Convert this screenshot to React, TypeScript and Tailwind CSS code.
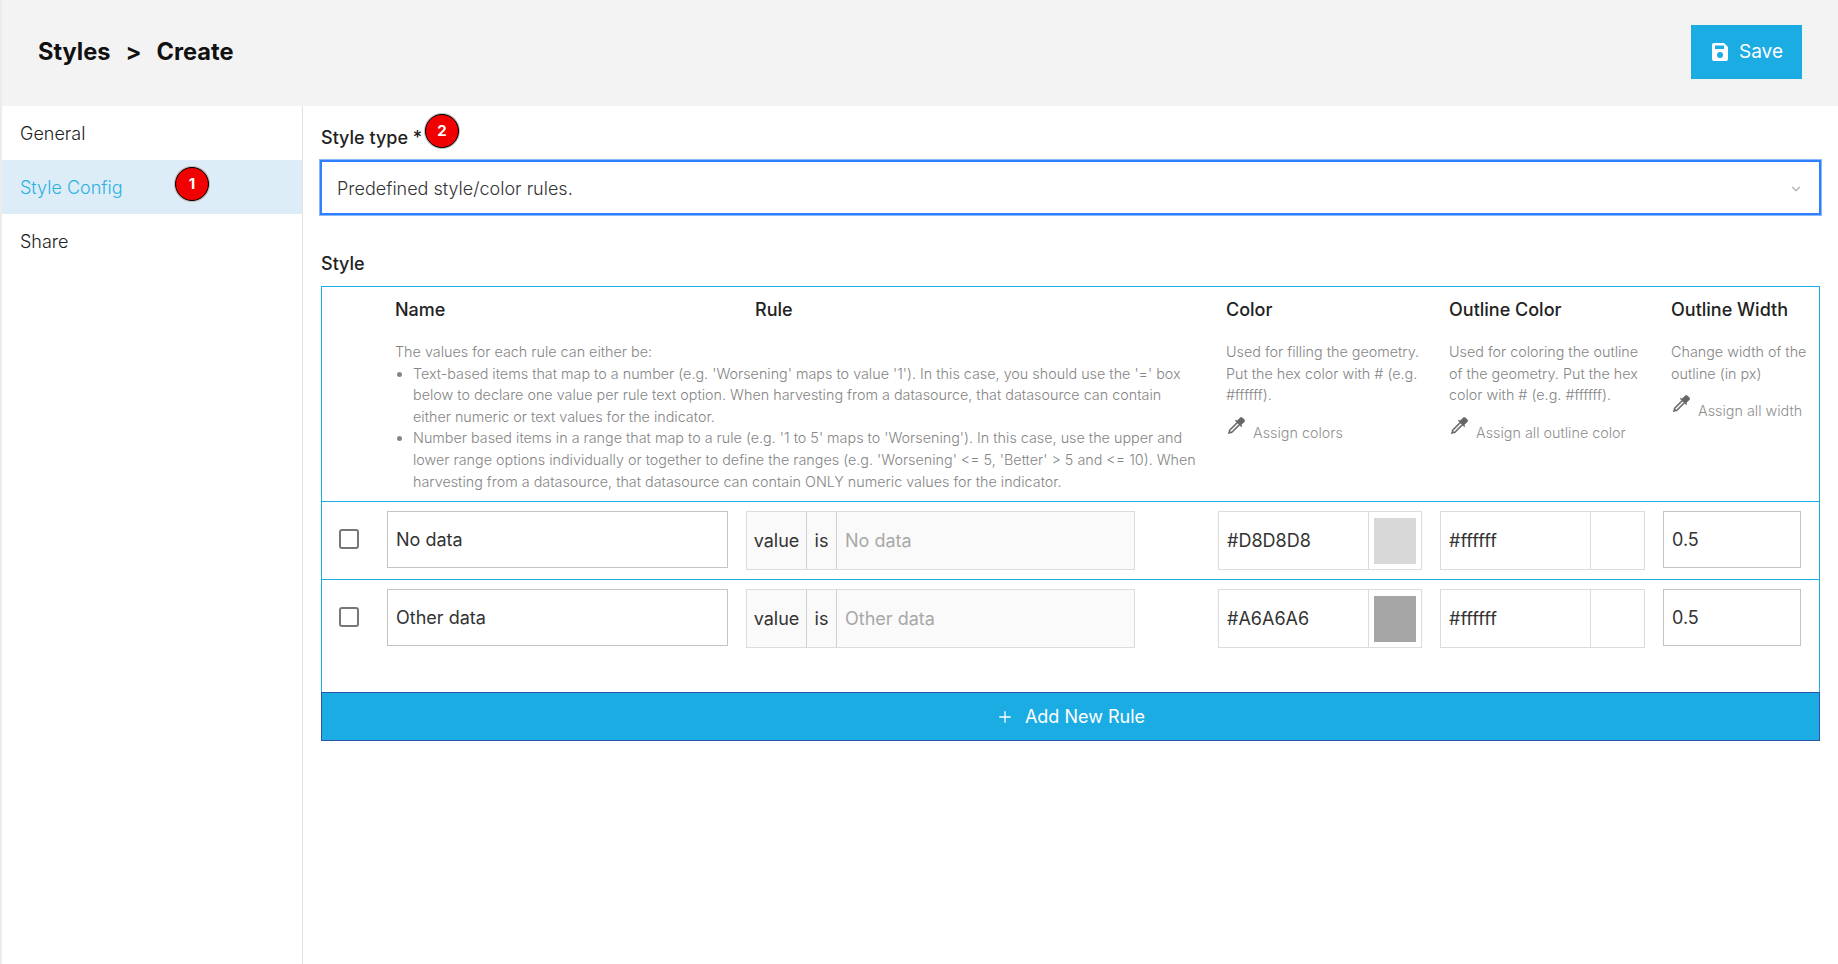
import { ChevronDown, Plus } from 'lucide-react';
import { BsEyedropper } from 'react-icons/bs';

const FONT = "font-['Inter',sans-serif]";

function Badge({ n, className }: { n: number; className: string }) {
  return (
    <span
      className={`absolute flex h-[34px] w-[34px] items-center justify-center rounded-full border border-black bg-[#f00000] text-[15px] font-bold text-white shadow-[0_0_0_1px_#bbb] ${className}`}
    >
      {n}
    </span>
  );
}

function SaveIcon() {
  return (
    <svg width="16" height="18" viewBox="0 0 16 18" aria-hidden="true">
      <path
        fillRule="evenodd"
        fill="#fff"
        d="M2 0h10l4 4v12a2 2 0 0 1-2 2H2a2 2 0 0 1-2-2V2a2 2 0 0 1 2-2zm1 2.5v3.5h9V2.5H3zM8 9a3 3 0 1 0 0 6a3 3 0 0 0 0-6z"
      />
    </svg>
  );
}

function Assign({ label }: { label: string }) {
  return (
    <div className="mt-4 flex items-start text-[14.35px] leading-[22px] text-[#8f8f8f]">
      <BsEyedropper className="ml-[2px] mr-[8px] mt-[-5px] shrink-0 text-[#666]" size={17} stroke="currentColor" strokeWidth={0.6} />
      <span>{label}</span>
    </div>
  );
}

function ColorField({ value, swatch, w, split }: { value: string; swatch?: string; w: string; split: string }) {
  return (
    <div className={`flex h-[59px] border border-[#dcdcdc] bg-white ${w}`}>
      <div className={`flex items-center border-r border-[#dcdcdc] pl-[8px] text-[18px] text-[#333] ${split}`}>{value}</div>
      <div className="flex flex-1 items-center justify-center">
        {swatch === '#D8D8D8' && <div className="h-[46px] w-[42px] bg-[#d8d8d8]" />}
        {swatch === '#A6A6A6' && <div className="h-[46px] w-[42px] bg-[#a6a6a6]" />}
      </div>
    </div>
  );
}

function RuleRow({ name, color, last }: { name: string; color: string; last?: boolean }) {
  return (
    <div className={`flex items-start pt-[9px] ${last ? 'h-[113px]' : 'h-[78px] border-b border-[#1cace4]'}`}>
      <div className="flex h-[57px] w-[65px] items-center pl-[17px]">
        <span className="mt-[-2px] h-[20px] w-[20px] rounded-[3px] border-[2.5px] border-[#777] bg-white" />
      </div>
      <div className="flex h-[57px] w-[341px] items-center border border-[#c4c4c4] bg-white px-[8px] text-[18px] text-[#333]">
        {name}
      </div>
      <div className="ml-[18px] flex h-[59px] w-[389px] border border-[#dcdcdc] bg-[#fafafa] text-[18px]">
        <div className="flex w-[60px] items-center justify-center border-r border-[#cfcfcf] text-[#333]">value</div>
        <div className="flex w-[30px] items-center justify-center border-r border-[#cfcfcf] text-[#333]">is</div>
        <div className="flex flex-1 items-center pl-[8px] text-[#a8a8a8]">{name}</div>
      </div>
      <div className="ml-[83px]">
        <ColorField value={color} swatch={color} w="w-[204px]" split="w-[150px]" />
      </div>
      <div className="ml-[18px]">
        <ColorField value="#ffffff" w="w-[205px]" split="w-[150px]" />
      </div>
      <div className="ml-[18px] flex h-[57px] w-[138px] items-center border border-[#c4c4c4] bg-white px-[8px] text-[18px] text-[#333]">
        0.5
      </div>
    </div>
  );
}

export default function App() {
  return (
    <div className={`${FONT} relative flex h-[964px] w-full flex-col overflow-hidden border-l-2 border-[#ececec] bg-white`}>
      <div className="absolute left-[-2px] top-0 h-[66px] w-[2px] bg-[#f00000]" />

      <header className="flex h-[106px] shrink-0 items-center justify-between bg-[#f3f3f3] pb-[2px] pl-[36px] pr-[36px]">
        <h1 className="flex gap-[15px] text-[23.6px] font-bold text-[#111]">
          <span>Styles</span>
          <span>&gt;</span>
          <span>Create</span>
        </h1>
        <button className="flex h-[54px] w-[111px] items-center justify-center gap-[11px] bg-[#1cace4] pl-[2px] text-[19px] text-white">
          <SaveIcon />
          Save
        </button>
      </header>

      <div className="flex flex-1">
        <nav className="w-[301px] shrink-0 border-r border-[#e3e3e3] text-[18px] font-light text-[#222]">
          <div className="flex h-[54px] items-center pl-[18px] pt-[1px]">General</div>
          <div className="relative flex h-[54px] items-center bg-[#dcedf7] pl-[18px] pt-[1px] text-[#2eb0e4]">
            Style Config
            <Badge n={1} className="left-[173px] top-[7px]" />
          </div>
          <div className="flex h-[54px] items-center pl-[18px] pt-[1px]">Share</div>
        </nav>

        <main className="min-w-0 flex-1 pl-[18px] pr-[17px]">
          <label className="relative mt-[20px] block text-[18px] font-medium leading-[24px] text-[#222]">
            Style type *
            <Badge n={2} className="left-[104px] top-[-12px]" />
          </label>
          <div className="-ml-px mt-[10px] flex h-[55px] items-center justify-between border-2 border-[#2f80ff] pl-[15px] pr-[16px] pt-[2px] text-[18px] font-light text-[#333] shadow-[0_0_0_1px_#8ab8ff]">
            Predefined style/color rules.
            <ChevronDown size={14} className="text-[#aab0b8]" />
          </div>

          <div className="mt-[37px] text-[18px] font-medium leading-[24px] text-[#222]">Style</div>

          <section className="mr-px mt-[10px] border border-[#1cace4]">
            <div className="flex h-[215px] border-b border-[#1cace4] pt-[11px] text-[14.35px] font-light leading-[21.6px] text-[#858585]">
              <div className="ml-[65px] w-[831px] pl-[8px] pr-[16px]">
                <div className="flex text-[18px] font-medium leading-[24px] text-[#222]">
                  <div className="w-[360px]">Name</div>
                  <div>Rule</div>
                </div>
                <div className="mt-[19px]">
                  The values for each rule can either be:
                  <ul className="list-disc pl-[18px]">
                    <li>
                      Text-based items that map to a number (e.g. 'Worsening' maps to value '1'). In this case, you should use the '=' box below to declare one value per rule text option. When harvesting from a datasource, that datasource can contain either numeric or text values for the indicator.
                    </li>
                    <li>
                      Number based items in a range that map to a rule (e.g. '1 to 5' maps to 'Worsening'). In this case, use the upper and lower range options individually or together to define the ranges (e.g. 'Worsening' &lt;= 5, 'Better' &gt; 5 and &lt;= 10). When harvesting from a datasource, that datasource can contain ONLY numeric values for the indicator.
                    </li>
                  </ul>
                </div>
              </div>
              <div className="w-[222px] pl-[8px] pr-[10px]">
                <div className="text-[18px] font-medium leading-[24px] text-[#222]">Color</div>
                <div className="mt-[19px]">Used for filling the geometry. Put the hex color with # (e.g. #ffffff).</div>
                <Assign label="Assign colors" />
              </div>
              <div className="w-[223px] pl-[9px] pr-[10px]">
                <div className="text-[18px] font-medium leading-[24px] text-[#222]">Outline Color</div>
                <div className="mt-[19px]">Used for coloring the outline of the geometry. Put the hex color with # (e.g. #ffffff).</div>
                <Assign label="Assign all outline color" />
              </div>
              <div className="min-w-0 flex-1 pl-[8px]">
                <div className="text-[18px] font-medium leading-[24px] text-[#222]">Outline Width</div>
                <div className="mt-[19px]">Change width of the outline (in px)</div>
                <Assign label="Assign all width" />
              </div>
            </div>

            <RuleRow name="No data" color="#D8D8D8" />
            <RuleRow name="Other data" color="#A6A6A6" last />

            <button className="-m-px flex h-[49px] w-[calc(100%+2px)] items-center justify-center gap-[11px] border border-[#2a55a8] bg-[#1cace4] text-[18px] text-white">
              <Plus size={18} strokeWidth={1.75} />
              Add New Rule
            </button>
          </section>
        </main>
      </div>
    </div>
  );
}
